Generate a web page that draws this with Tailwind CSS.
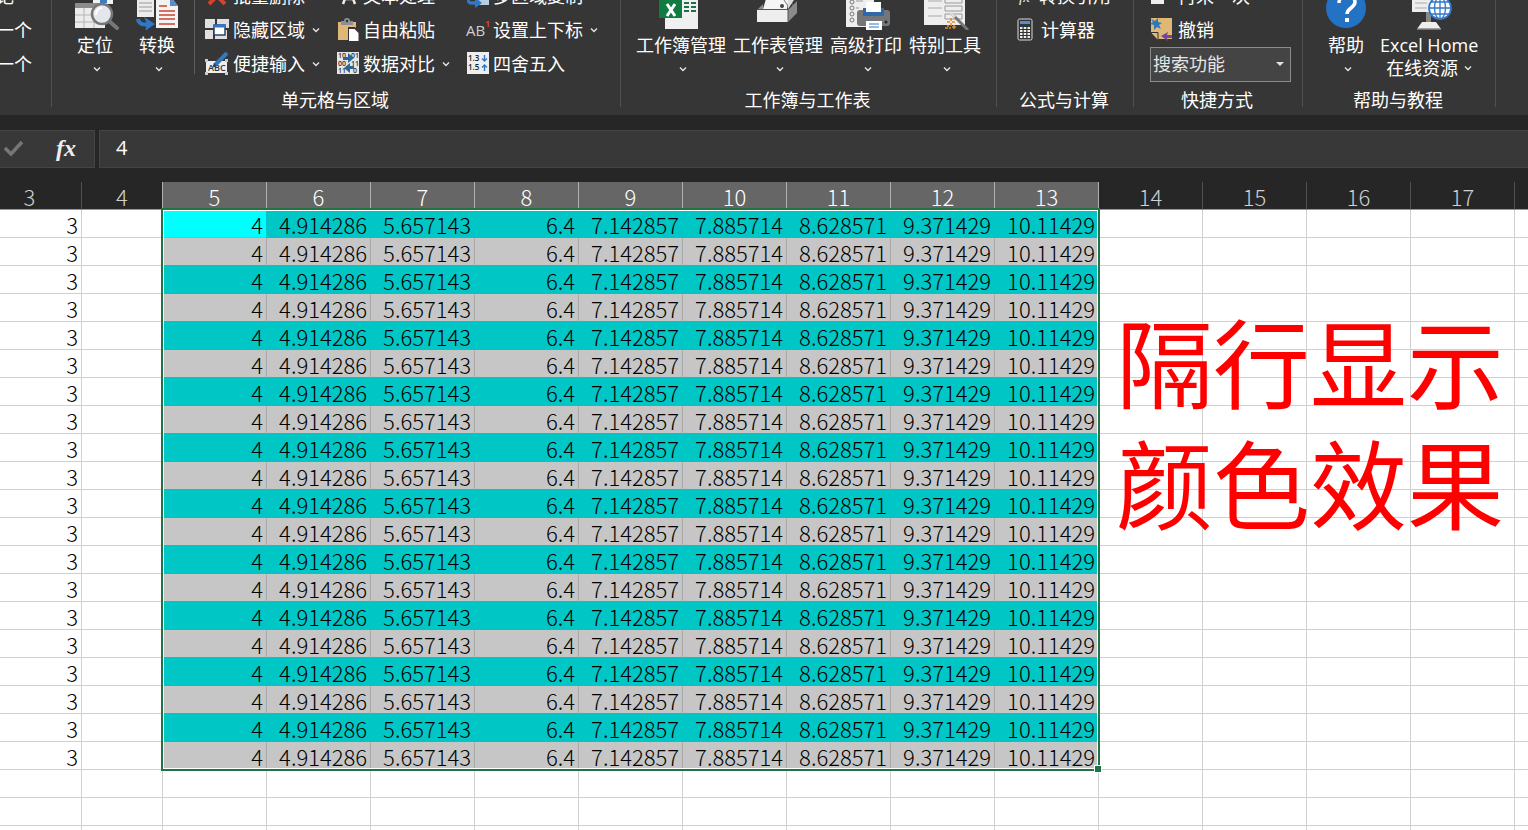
<!DOCTYPE html>
<html lang="zh-CN">
<head>
<meta charset="utf-8">
<title>Excel</title>
<script src="https://cdn.jsdelivr.net/npm/@tailwindcss/browser@4"></script>
</head>
<body class="h-screen overflow-hidden flex flex-col bg-[#262626] text-white text-[18px] font-['Open_Sans','Noto_Sans_CJK_SC',sans-serif]">

<svg class="hidden"><symbol id="chev" viewBox="0 0 8 6"><path d="M1 1.5L4 4.5L7 1.5" fill="none" stroke="#e4e4e4" stroke-width="1.4"/></symbol></svg>

<header class="h-[115px] shrink-0 overflow-hidden flex items-end bg-[#363636] whitespace-nowrap">

  <section class="w-[52px] h-[136px] shrink-0 flex flex-col items-end pr-5 relative after:absolute after:right-0 after:top-0 after:bottom-2 after:w-px after:bg-[#505050]">
    <button class="h-[34px] mr-[18px] shrink-0">标记</button>
    <button class="h-[34px] shrink-0">上一个</button>
    <button class="h-[34px] shrink-0">下一个</button>
  </section>

  <section class="w-[569px] h-[136px] shrink-0 flex flex-col relative after:absolute after:right-0 after:top-0 after:bottom-2 after:w-px after:bg-[#505050]">
    <div class="flex h-[102px] pl-3">
      <button class="w-[62px] pt-[3px] flex flex-col items-center">
        <svg class="w-12 h-12" viewBox="0 0 48 48">
          <path d="M22 0h20v22H22z" fill="#f2f2f2"/><path d="M29 17h7v4h-7z" fill="#3d7cc4"/>
          <path d="M4 21h30v25H4z" fill="#ececec"/><path d="M4 21h30v5H4z" fill="#8c8c8c"/>
          <path d="M4 33h30M4 40h30M13 26v20M23 26v20" stroke="#b5b5b5"/>
          <path d="M38 39l8 7" stroke="#777" stroke-width="4" stroke-linecap="round"/>
          <circle cx="31" cy="32" r="10" fill="#e4e6ee" stroke="#777" stroke-width="2.5"/><path d="M25 33a6 6 0 0 1 6-7" stroke="#fff" stroke-width="2" fill="none"/>
        </svg>
        <span class="h-8 leading-[31px]">定位</span>
        <svg class="w-2 h-1.5 mt-1 ml-1"><use href="#chev"/></svg>
      </button>
      <button class="w-[62px] pt-[3px] flex flex-col items-center">
        <svg class="w-12 h-12" viewBox="0 0 48 48">
          <path d="M4 4h17v31H4z" fill="#ececec"/><path d="M6 21h13M6 25h13M6 29h13" stroke="#999"/>
          <path d="M23 14h14l8 10v22H23z" fill="#f3f3f3"/><path d="M37 14v10h8z" fill="#5b8bc5"/>
          <path d="M26 24h8M26 29h16M26 33h16M26 37h16M26 42h16" stroke="#c74634" stroke-width="1.3"/>
          <path d="M5 37c1 6 6 6 12 5" stroke="#2f78c8" stroke-width="4" fill="none"/><path d="M11 35l11 7-10 7 2-7z" fill="#2f78c8"/>
        </svg>
        <span class="h-8 leading-[31px]">转换</span>
        <svg class="w-2 h-1.5 mt-1 ml-1"><use href="#chev"/></svg>
      </button>
      <div class="w-px h-[95px] bg-[#5c5c5c] ml-[6px] mr-[10px]"></div>
      <div class="w-[132px]">
        <button class="h-[34px] flex items-center gap-1">
          <svg class="w-6 h-6" viewBox="0 0 24 24"><path d="M4 4L20 20M20 4L4 20" stroke="#d2452b" stroke-width="4"/></svg>批量删除</button>
        <button class="h-[34px] flex items-center gap-1">
          <svg class="w-6 h-6" viewBox="0 0 24 24"><path d="M0 1h10v9H0zM12 1h12v9H12zM0 12h8v9H0z" fill="#e0e0e0"/><path d="M10 12h12v9H10z" fill="#e0e0e0"/><rect x="9" y="7" width="11" height="10" fill="#fff" stroke="#24446c" stroke-width="1.500"/><path d="M9 6.500h11v3H9z" fill="#2f78c8"/></svg>隐藏区域
          <svg class="w-2 h-1.5 ml-[3px]"><use href="#chev"/></svg></button>
        <button class="h-[34px] flex items-center gap-1">
          <svg class="w-6 h-6" viewBox="0 0 24 24"><path d="M1 9h21v12H1z" fill="#eee"/><path d="M0 7h3v3H0zM20 7h3v3h-3zM0 20h3v3H0zM20 20h3v3h-3z" fill="#ccc"/><text x="3" y="19" font-size="9" font-weight="600" font-family="Open Sans" fill="#333">ABC</text><path d="M10 13L22 1" stroke="#3377bd" stroke-width="4"/><path d="M7 16l2-5 3 3z" fill="#24446c"/></svg>便捷输入
          <svg class="w-2 h-1.5 ml-[3px]"><use href="#chev"/></svg></button>
      </div>
      <div class="w-[130px]">
        <button class="h-[34px] flex items-center gap-1">
          <svg class="w-[22px] h-6" viewBox="0 0 22 24"><path d="M6 20L12 4L18 20M8 15h8" stroke="#eee" stroke-width="2.500" fill="none"/></svg>文本处理</button>
        <button class="h-[34px] flex items-center gap-1">
          <svg class="w-[22px] h-6" viewBox="0 0 22 24"><path d="M1 4h18v18H1z" fill="#dfb878"/><path d="M4 3h3a3 3 0 0 1 6 0h3v4H4z" fill="#8b9095"/><circle cx="10" cy="3" r="1.200" fill="#333"/><path d="M11 9h7l4 4v11H11z" fill="#363636"/><path d="M12 11h5.500l4 4v8H12z" fill="#fff"/></svg>自由粘贴</button>
        <button class="h-[34px] flex items-center gap-1">
          <svg class="w-[22px] h-6" viewBox="0 0 22 24"><path d="M0 0h22v22H0z" fill="#e6e6e6"/><g font-size="7" font-family="Open Sans" font-weight="600" fill="#333"><text x="1" y="6">10</text><text x="14" y="6">01</text><text x="1" y="14">00</text><text x="14" y="14">11</text><text x="1" y="21">11</text><text x="16" y="21">0</text></g><path d="M6 5h5V1l6 5-6 5V8H6zM17 17h-4v4l-6-5 6-5v3h4z" fill="#2c6496"/></svg>数据对比
          <svg class="w-2 h-1.5 ml-[3px]"><use href="#chev"/></svg></button>
      </div>
      <div>
        <button class="h-[34px] flex items-center gap-1">
          <svg class="w-[22px] h-6" viewBox="0 0 22 24"><path d="M9 10h13v11H9z" fill="#b8cde0"/><path d="M0 14c2 8 7 4 11 5" stroke="#2f78c8" stroke-width="3.500" fill="none"/><path d="M8 13l7 6-7 5z" fill="#2f78c8"/></svg>多区域复制</button>
        <button class="h-[34px] flex items-center gap-1">
          <svg class="w-[22px] h-6 overflow-visible" viewBox="0 0 22 24"><text x="-1" y="18" font-size="15" font-weight="500" font-family="Open Sans" fill="#d0d0d0">AB</text><text x="18" y="9" font-size="9" font-weight="700" font-family="Open Sans" fill="#d2452b">1</text></svg>设置上下标
          <svg class="w-2 h-1.5 ml-[3px]"><use href="#chev"/></svg></button>
        <button class="h-[34px] flex items-center gap-1">
          <svg class="w-[22px] h-6" viewBox="0 0 22 24"><path d="M0 0h22v22H0z" fill="#eee"/><g font-size="8" font-weight="600" font-family="Open Sans" fill="#222"><text x="1" y="9">1.3</text><text x="1" y="18">1.5</text></g><path d="M17.500 3v6M15 6.500l2.500 2.500L20 6.500M17.500 19v-6M15 15.500l2.500-2.500L20 15.500" stroke="#2f78c8" stroke-width="1.400" fill="none"/></svg>四舍五入</button>
      </div>
    </div>
    <h2 class="h-[34px] leading-[38px] pr-[3px] text-center">单元格与区域</h2>
  </section>

  <section class="w-[376px] h-[136px] shrink-0 flex flex-col relative after:absolute after:right-0 after:top-0 after:bottom-2 after:w-px after:bg-[#505050]">
    <div class="flex justify-center gap-[7px] h-[102px] pr-px">
      <button class="pt-[3px] flex flex-col items-center">
        <svg class="w-12 h-12" viewBox="0 0 48 48"><path d="M8 4h33v43H8z" fill="#f0f0f0"/><path d="M27 21h5M34 21h5M27 25h5M34 25h5M27 29h5M34 29h5" stroke="#1c7145" stroke-width="1.800"/><path d="M2 13h23v23H2z" fill="#107c41"/><path d="M10 22l8 12M18 22l-8 12" stroke="#fff" stroke-width="3"/></svg>
        <span class="h-8 leading-[31px]">工作簿管理</span>
        <svg class="w-2 h-1.5 mt-1 ml-1"><use href="#chev"/></svg>
      </button>
      <button class="pt-[3px] flex flex-col items-center">
        <svg class="w-12 h-12" viewBox="0 0 48 48"><path d="M9 27L14 10h22l-3 17z" fill="#f5f5f5"/><path d="M30 18l4 6M35 18l4 5" stroke="#777"/><path d="M34 18h6l-6 9z" fill="#ddd"/><circle cx="28" cy="24" r="2" fill="#444"/><path d="M3 28h31v12H3z" fill="#eee"/><path d="M3 28l6-6v5zM34 28l9-9v12l-9 9z" fill="#8a8a8a"/><path d="M34 28v12M3 27.500h31" stroke="#555"/></svg>
        <span class="h-8 leading-[31px]">工作表管理</span>
        <svg class="w-2 h-1.5 mt-1 ml-1"><use href="#chev"/></svg>
      </button>
      <button class="pt-[3px] flex flex-col items-center">
        <svg class="w-12 h-12" viewBox="0 0 48 48"><path d="M4 4h28v41H4z" fill="#eee"/><g fill="none" stroke="#777"><circle cx="10" cy="20" r="2"/><circle cx="10" cy="26" r="2"/><circle cx="10" cy="32" r="2"/><circle cx="10" cy="38" r="2"/></g><path d="M14 19h7M14 26h3" stroke="#999"/><rect x="15" y="28" width="33" height="16" rx="3" fill="#74777a"/><path d="M21 26h21v8H21z" fill="#2f68a8"/><path d="M24 20h15v10H24z" fill="#fff"/><path d="M24 39h16v9H24z" fill="#fff"/><path d="M27 42h10M27 45h10" stroke="#2f78c8"/><circle cx="44" cy="40" r="1.500" fill="#222"/></svg>
        <span class="h-8 leading-[31px]">高级打印</span>
        <svg class="w-2 h-1.5 mt-1 ml-1"><use href="#chev"/></svg>
      </button>
      <button class="pt-[3px] flex flex-col items-center">
        <svg class="w-12 h-12" viewBox="0 0 48 48"><path d="M3 4h41v39H3z" fill="#eee"/><path d="M7 19h14M7 26h14M7 34h14" stroke="#aaa"/><path d="M24 13h17v8H24zM24 24h17v5H24zM24 32h17v5H24z" stroke="#999" fill="none"/><path d="M31 32l16 16" stroke="#777" stroke-width="3"/><path d="M30 31l4 4" stroke="#ddd" stroke-width="3"/><path d="M26 40h3M31 40h3M30 36v3M30 41v3M24 46h3M28 46h2M27 43v2M33 43v4M31 45h4" stroke="#e58a2c" stroke-width="1.500"/></svg>
        <span class="h-8 leading-[31px]">特别工具</span>
        <svg class="w-2 h-1.5 mt-1 ml-1"><use href="#chev"/></svg>
      </button>
    </div>
    <h2 class="h-[34px] leading-[38px] pr-[3px] text-center">工作簿与工作表</h2>
  </section>

  <section class="w-[137px] h-[136px] shrink-0 flex flex-col relative after:absolute after:right-0 after:top-0 after:bottom-2 after:w-px after:bg-[#505050]">
    <div class="h-[102px] pl-5">
      <button class="h-[34px] flex items-center gap-1.5"><svg class="w-4 h-6" viewBox="0 0 16 24"><text x="2" y="18" font-size="15" font-style="italic" font-family="Liberation Serif" fill="#eee">fx</text></svg>转换引用</button>
      <button class="h-[34px] flex items-center gap-2"><svg class="w-4 h-6" viewBox="0 0 16 24"><rect x="1" y="1" width="14" height="21" rx="1.500" fill="#333" stroke="#ddd"/><path d="M3 3h10v3H3z" fill="#4f8fd6"/><path d="M3 10h10M3 13h10M3 16h10M3 19h10" stroke="#eee" stroke-width="1.800" stroke-dasharray="2.500 1.250"/></svg>计算器</button>
    </div>
    <h2 class="h-[34px] leading-[38px] pr-[3px] text-center">公式与计算</h2>
  </section>

  <section class="w-[169px] h-[136px] shrink-0 flex flex-col relative after:absolute after:right-0 after:top-0 after:bottom-2 after:w-px after:bg-[#505050]">
    <div class="h-[102px] pl-4">
      <button class="h-[34px] flex items-center gap-1.5"><svg class="w-[22px] h-6" viewBox="0 0 22 24"><path d="M1 2h13v18H1z" fill="#eee"/><path d="M5 12h6v4H5z" fill="#888"/></svg>再来一次</button>
      <button class="h-[34px] flex items-center gap-1.5"><svg class="w-[22px] h-6" viewBox="0 0 22 24"><path d="M1 0h21v21H8L1 14z" fill="#dfb878"/><path d="M1 14.500h7V22" fill="#dfb878" stroke="#333"/><path d="M1 1l4 2 3-3 0 4 4 1-3 2 2 4-4-2-3 3 0-5-4-1 3-2z" fill="#2f78b8"/><path d="M11 18l7-4-1 3h5v3h-5l1 3z" fill="#7145a0"/></svg>撤销</button>
      <div class="relative w-[141px] h-[35px]">
        <select aria-label="搜索功能" class="w-full h-full appearance-none bg-[#444] border border-[#8c8c8c] pl-0.5 text-[#e6e6e6]"><option>搜索功能</option></select>
        <svg class="absolute right-[7px] top-[14px] w-2 h-1.5 pointer-events-none" viewBox="0 0 8 6"><path d="M0 1h8L4 5z" fill="#e0e0e0"/></svg>
      </div>
    </div>
    <h2 class="h-[34px] leading-[38px] pr-[3px] text-center">快捷方式</h2>
  </section>

  <section class="w-[193px] h-[136px] shrink-0 flex flex-col relative after:absolute after:right-0 after:top-0 after:bottom-2 after:w-px after:bg-[#505050]">
    <div class="flex h-[102px] pl-6 gap-[15px]">
      <button class="pt-[3px] flex flex-col items-center">
        <svg class="w-[38px] h-12 overflow-visible" viewBox="0 0 38 48"><circle cx="19" cy="26" r="20" fill="#2372c4"/><path d="M12 21c0-10 16-9 16-1 0 6-8 6-8 12" stroke="#fff" stroke-width="3.500" fill="none"/><path d="M18 36h4v4h-4z" fill="#fff"/></svg>
        <span class="h-8 leading-[31px] w-[38px] flex justify-center">帮助</span>
        <svg class="w-2 h-1.5 mt-1 ml-1"><use href="#chev"/></svg>
      </button>
      <button class="pt-[3px] flex flex-col items-center">
        <svg class="w-12 h-12" viewBox="0 0 48 48"><path d="M7 4h22v26H7z" fill="#eee"/><path d="M10 21h12M10 26h12" stroke="#aaa"/><path d="M21 30h5v11h-5z" fill="#888"/><path d="M17 40h14l5 7H12z" fill="#eee"/><path d="M12 47h24" stroke="#888" stroke-width="1.500"/><circle cx="35" cy="26" r="11" fill="#fff" stroke="#2f78c8" stroke-width="1.800"/><path d="M35 15v22M24 26h22M26 20h18M26 32h18" stroke="#2f78c8" stroke-width="1.300"/><ellipse cx="35" cy="26" rx="5.500" ry="11" fill="none" stroke="#2f78c8" stroke-width="1.300"/></svg>
        <span class="h-[30px] leading-[31px]">Excel Home</span>
        <span class="flex items-center gap-1.5 leading-4">在线资源<svg class="w-2 h-1.5"><use href="#chev"/></svg></span>
      </button>
    </div>
    <h2 class="h-[34px] leading-[38px] pr-[3px] text-center">帮助与教程</h2>
  </section>
</header>

<div class="flex gap-1 h-[38px] mt-[15px] mb-[14px] shrink-0">
  <div class="w-24 -ml-px flex items-center justify-between pl-1 pb-0.5 pr-[18px] bg-[#383838] border border-[#444]">
    <button aria-label="输入"><svg class="w-5 h-5" viewBox="0 0 20 20"><path d="M1 10l6 6L18 4" fill="none" stroke="#777" stroke-width="3.500"/></svg></button>
    <button class="font-['Liberation_Serif',serif] italic font-bold text-[24px] leading-6 text-[#eee]">fx</button>
  </div>
  <input aria-label="编辑栏" value="4" class="flex-1 bg-[#383838] border border-r-0 border-[#444] pl-4 pb-0.5 text-[20px] font-['Open_Sans',sans-serif]">
</div>

<main class="flex-1 overflow-hidden relative bg-white font-['Noto_Sans_CJK_SC',sans-serif]">
  <table class="w-full table-fixed border-separate border-spacing-0 text-[22px] leading-6 font-light text-black">
    <colgroup id="cols"></colgroup>
    <thead><tr id="head"></tr></thead>
    <tbody id="body"></tbody>
  </table>
  <div class="absolute left-[161px] top-[26px] w-[939px] h-[563px] border-2 border-[#217346] pointer-events-none">
    <div class="w-full h-full border border-white"></div>
    <i class="absolute -right-[4px] -bottom-[4px] w-1.5 h-1.5 bg-[#217346] border border-white box-content"></i>
  </div>
  <p class="absolute left-[1116px] top-[116px] text-[97px] leading-[121px] text-[#ff0000] whitespace-nowrap">隔行显示<br>颜色效果</p>
</main>

<script>
const values = ['3', '', '4', '4.914286', '5.657143', '6.4', '7.142857', '7.885714', '8.628571', '9.371429', '10.11429', '', '', '', '', ''];
const widths = [82, 81, ...Array(13).fill(104)];
document.getElementById('cols').innerHTML = widths.map(w => `<col style="width:${w}px">`).join('') + '<col>';
document.getElementById('head').innerHTML = values.map((v, i) => {
  const picked = i > 1 && i < 11;
  const look = picked ? 'bg-[#666] text-white border-r-[#b0b0b0]' : i === 1 ? 'bg-[#262626] text-[#d0d0d0] border-r-[#b0b0b0]' : 'bg-[#262626] text-[#d0d0d0] border-r-[#505050]';
  const shift = i === 0 ? 'pr-[22px]' : '';
  return `<th scope="col" class="h-7 p-0 pt-px font-light border-r border-b border-b-[#999] last:border-r-0 ${look} ${shift}">${i < 15 ? i + 3 : ''}</th>`;
}).join('');
let rows = '';
for (let r = 0; r < 23; r++) {
  rows += '<tr>' + values.map((v, i) => {
    const picked = i > 1 && i < 11 && r < 20;
    let look = 'border-[#d0d0d0]';
    if (picked) look = r % 2 ? 'bg-[#c6c6c6] border-r-[#a8a8a8] border-b-[#00c6c6]' : 'bg-[#00c6c6] border-[#00c6c6]';
    if (r === 0 && i === 2) look = 'bg-[#00ffff] border-r-[#00c6c6] border-b-[#a8a8a8]';
    return `<td class="h-7 p-0 pt-px pr-[3px] text-right border-r border-b last:border-r-0 ${look}">${r < 20 ? v : ''}</td>`;
  }).join('') + '</tr>';
}
document.getElementById('body').innerHTML = rows;
</script>
</body>
</html>
